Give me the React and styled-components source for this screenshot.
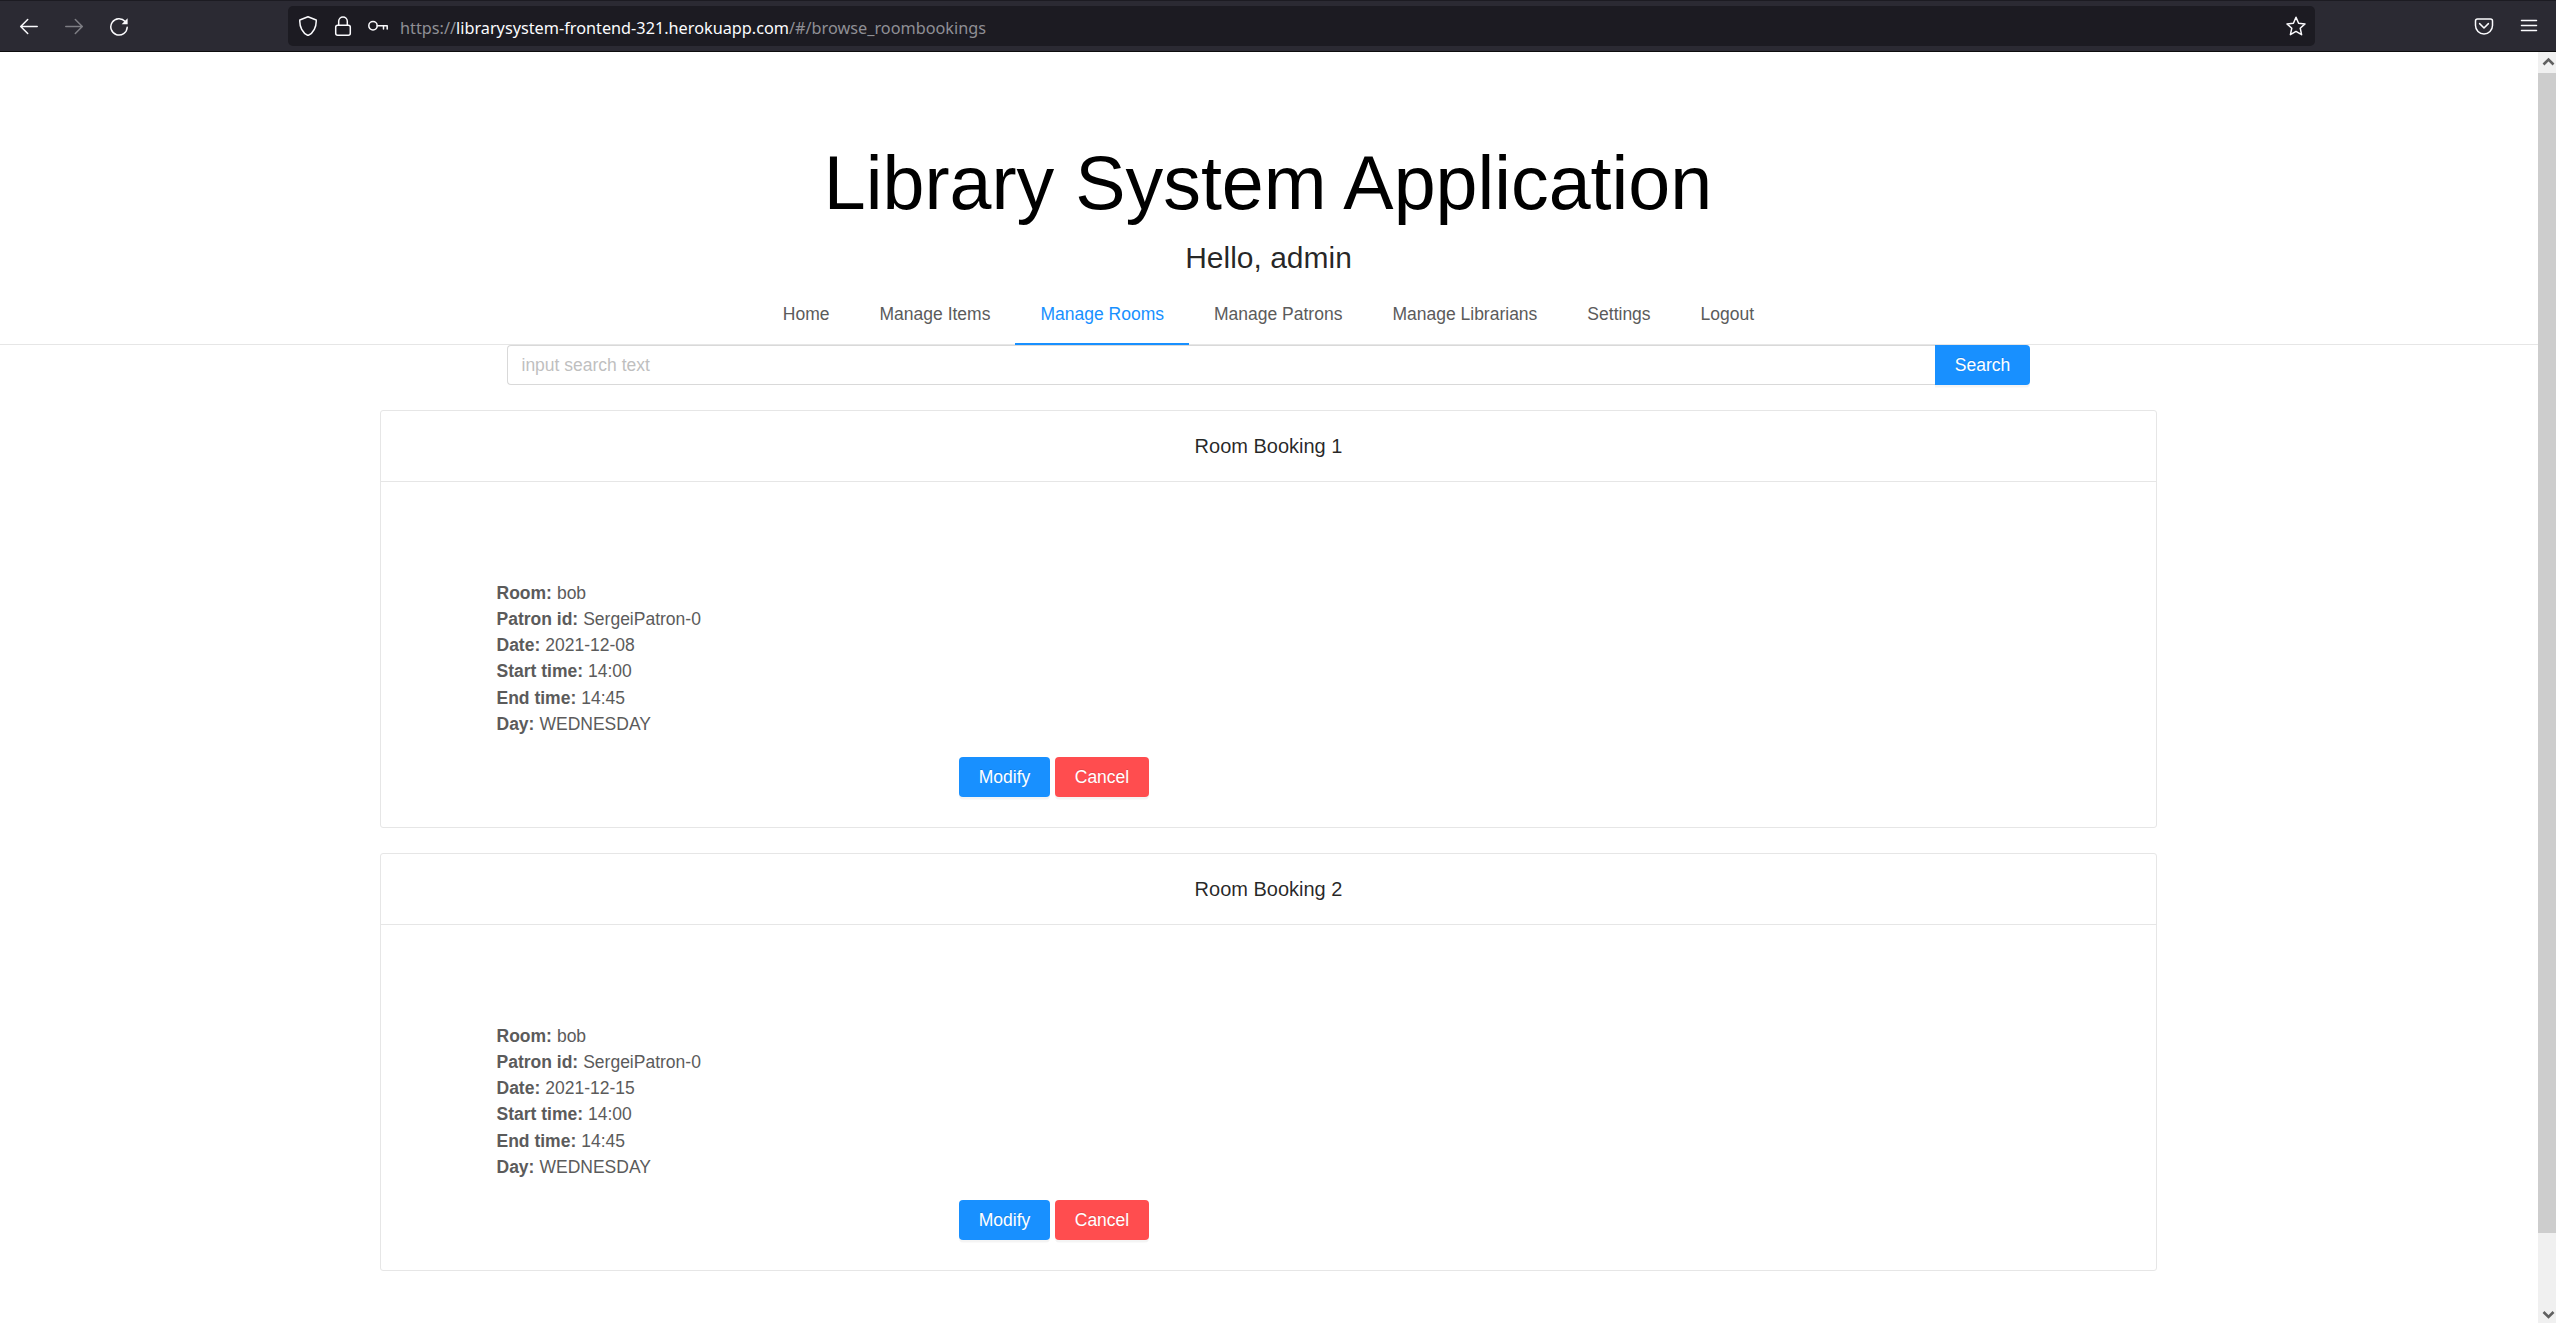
import React from "react";
import styled, { createGlobalStyle } from "styled-components";

const GlobalStyle = createGlobalStyle`
  * { box-sizing: border-box; }
  html, body { margin: 0; height: 100%; overflow: hidden; background: #fff; }
  body { font-family: "Liberation Sans", Arial, sans-serif; }
`;

const Window = styled.div`
  display: flex;
  flex-direction: column;
  width: 2556px;
  height: 1323px;
  background: #fff;
`;

const Toolbar = styled.header`
  display: flex;
  align-items: center;
  height: 52px;
  flex: none;
  background: #2b2a33;
  border-top: 1px solid #1c1b22;
  border-bottom: 1px solid #0c0c0d;
  color: #fbfbfe;
`;

const NavButtons = styled.div`
  display: flex;
  align-items: center;
  gap: 25px;
  width: 288px;
  padding-left: 19px;
`;

const Icon = styled.svg`
  display: block;
  flex: none;
  width: 20px;
  height: 20px;
  fill: none;
  stroke: currentColor;
  stroke-width: 1.5;
  stroke-linecap: round;
  stroke-linejoin: round;
  opacity: ${(p) => (p.$dim ? 0.4 : 1)};
`;

const UrlBar = styled.div`
  display: flex;
  align-items: center;
  width: 2027px;
  height: 40px;
  padding: 0 9px 0 10px;
  border-radius: 5px;
  background: #1c1b22;
`;

const UrlIcons = styled.div`
  display: flex;
  gap: 15px;
  margin-right: 12px;
`;

const UrlText = styled.div`
  flex: 1;
  padding-top: 4px;
  font: 16.25px/24px "Noto Sans", sans-serif;
  white-space: nowrap;
  color: #8f8f95;
`;

const Host = styled.span`
  color: #fbfbfe;
`;

const ToolbarEnd = styled.div`
  display: flex;
  flex: 1;
  align-items: center;
  justify-content: flex-end;
  gap: 25px;
  padding-right: 17px;
`;

const Viewport = styled.div`
  display: flex;
  flex: 1;
  min-height: 0;
`;

const Page = styled.main`
  display: flex;
  flex-direction: column;
  align-items: center;
  width: 2538px;
`;

const Scrollbar = styled.div`
  display: flex;
  flex-direction: column;
  justify-content: space-between;
  align-items: flex-end;
  width: 18px;
  background: #f0f0f0;
`;

const Arrow = styled.svg`
  display: block;
  width: 18px;
  height: 21px;
  fill: none;
  stroke: #606060;
  stroke-width: 2.6;
`;

const Thumb = styled.div`
  width: 18px;
  height: 1160px;
  margin-bottom: auto;
  background: #cdcdcd;
`;

const Title = styled.h1`
  margin: 72px 2px 1px 0;
  font-size: 75.4px;
  font-weight: 400;
  line-height: 118px;
  color: #000;
`;

const Greeting = styled.h2`
  margin: 0 1px 0 0;
  font-size: 30px;
  font-weight: 400;
  line-height: 30px;
  color: rgba(0, 0, 0, 0.85);
`;

const Menu = styled.nav`
  display: flex;
  justify-content: center;
  width: 100%;
  height: 58px;
  margin-top: 14px;
  padding-right: 1px;
  border-bottom: 1px solid #e6e6e6;
`;

const MenuItem = styled.a`
  height: 58px;
  padding: 0 25px;
  border-bottom: 2px solid ${(p) => (p.$active ? "#1890ff" : "transparent")};
  font-size: 17.5px;
  line-height: 55px;
  color: ${(p) => (p.$active ? "#1890ff" : "#5b5b5b")};
`;

const SearchRow = styled.div`
  display: flex;
  width: 1523px;
  height: 40px;
  margin-right: 1px;
`;

const SearchInput = styled.input`
  flex: 1;
  min-width: 0;
  padding: 0 13.5px;
  border: 1px solid #d9d9d9;
  border-right: 0;
  border-radius: 4px 0 0 4px;
  outline: 0;
  font: 17.5px "Liberation Sans", Arial, sans-serif;
  &::placeholder { color: #bfbfbf; opacity: 1; }
`;

const Button = styled.button`
  width: ${(p) => p.$width}px;
  height: 40px;
  padding: 0;
  border: 0;
  border-radius: ${(p) => (p.$joined ? "0 4px 4px 0" : "4px")};
  background: ${(p) => (p.$danger ? "#ff4d4f" : "#1890ff")};
  box-shadow: 0 2.5px 0 rgba(0, 0, 0, 0.045);
  text-shadow: 0 -1px 0 rgba(0, 0, 0, 0.12);
  color: #fff;
  font: 17.5px/40px "Liberation Sans", Arial, sans-serif;
`;

const Card = styled.section`
  width: 1777px;
  height: 418px;
  margin: 25px 1px 0 0;
  border: 1px solid #e6e6e6;
  border-radius: 3px;
`;

const CardHead = styled.h3`
  height: 71px;
  margin: 0;
  border-bottom: 1px solid #e6e6e6;
  font-size: 20px;
  font-weight: 400;
  line-height: 71px;
  text-align: center;
  color: rgba(0, 0, 0, 0.85);
`;

const Details = styled.dl`
  margin: 0;
  padding: 97.7px 0 0 115.5px;
  font-size: 17.5px;
  line-height: 26.25px;
  color: #5b5b5b;
`;

const Detail = styled.div`
  display: flex;
  gap: 5px;
  height: 26.25px;
`;

const Label = styled.dt`
  font-weight: 700;
`;

const Value = styled.dd`
  margin: 0;
`;

const Actions = styled.div`
  display: flex;
  gap: 5px;
  padding: 19.8px 0 0 578px;
`;

const menu = ["Home", "Manage Items", "Manage Rooms", "Manage Patrons", "Manage Librarians", "Settings", "Logout"];

const bookings = [
  { id: 1, date: "2021-12-08" },
  { id: 2, date: "2021-12-15" },
];

function Booking({ id, date }) {
  const rows = [
    ["Room:", "bob"],
    ["Patron id:", "SergeiPatron-0"],
    ["Date:", date],
    ["Start time:", "14:00"],
    ["End time:", "14:45"],
    ["Day:", "WEDNESDAY"],
  ];
  return (
    <Card>
      <CardHead>Room Booking {id}</CardHead>
      <Details>
        {rows.map(([label, value]) => (
          <Detail key={label}>
            <Label>{label}</Label>
            <Value>{value}</Value>
          </Detail>
        ))}
      </Details>
      <Actions>
        <Button $width={91}>Modify</Button>
        <Button $width={94} $danger>Cancel</Button>
      </Actions>
    </Card>
  );
}

export default function App() {
  return (
    <Window>
      <GlobalStyle />
      <Toolbar>
        <NavButtons>
          <Icon viewBox="0 0 20 20"><path d="M18.2 10.5H2M8.7 3.5 1.7 10.5l7 7" /></Icon>
          <Icon viewBox="0 0 20 20" $dim><path d="M1.8 10.5H18M11.3 3.5l7 7-7 7" /></Icon>
          <Icon viewBox="0 0 20 20">
            <path d="M16.2 5.5A8.2 8.2 0 1 0 18.2 11.2" />
            <path d="M18.6 2.2v6h-6z" fill="currentColor" stroke="none" />
          </Icon>
        </NavButtons>
        <UrlBar>
          <UrlIcons>
            <Icon viewBox="0 0 20 20">
              <path d="M10 .8 18.2 4c.4 6.6-2.7 13.2-8.2 15.5C4.5 17.2 1.4 10.6 1.8 4z" />
            </Icon>
            <Icon viewBox="0 0 20 20">
              <rect x="2.7" y="9.3" width="14.6" height="9.9" rx="2" />
              <path d="M5.7 9.3V5.2a4.3 4.3 0 0 1 8.6 0v4.1" />
            </Icon>
            <Icon viewBox="0 0 20 20">
              <circle cx="5" cy="9.8" r="4.2" />
              <path d="M9.2 9.8h10v3.2M15.5 9.8v3.2" />
            </Icon>
          </UrlIcons>
          <UrlText>
            https://<Host>librarysystem-frontend-321.herokuapp.com</Host>/#/browse_roombookings
          </UrlText>
          <Icon viewBox="0 0 20 20">
            <path d="m10 1.3 2.6 5.9 6.4.7-4.8 4.3 1.4 6.5-5.6-3.3-5.6 3.3 1.4-6.5L1 7.9l6.400-.7z" />
          </Icon>
        </UrlBar>
        <ToolbarEnd>
          <Icon viewBox="0 0 20 20">
            <path d="M3.500 3h13c1.200 0 2 .8 2 2v4.500a8.500 8.500 0 0 1-17 0V5c0-1.200.8-2 2-2zM5.600 7.600 10 12l4.400-4.400" />
          </Icon>
          <Icon viewBox="0 0 20 20"><path d="M2.500 4.500h15M2.500 9.500h15M2.500 14.500h15" /></Icon>
        </ToolbarEnd>
      </Toolbar>
      <Viewport>
        <Page>
          <Title>Library System Application</Title>
          <Greeting>Hello, admin</Greeting>
          <Menu>
            {menu.map((label) => (
              <MenuItem key={label} $active={label === "Manage Rooms"}>{label}</MenuItem>
            ))}
          </Menu>
          <SearchRow>
            <SearchInput placeholder="input search text" />
            <Button $width={95} $joined>Search</Button>
          </SearchRow>
          {bookings.map((booking) => (
            <Booking key={booking.id} {...booking} />
          ))}
        </Page>
        <Scrollbar>
          <Arrow viewBox="0 0 18 21"><path d="m5.500 12.500 5-5 5 5" /></Arrow>
          <Thumb />
          <Arrow viewBox="0 0 18 21"><path d="m5.500 10 5 5 5-5" /></Arrow>
        </Scrollbar>
      </Viewport>
    </Window>
  );
}
